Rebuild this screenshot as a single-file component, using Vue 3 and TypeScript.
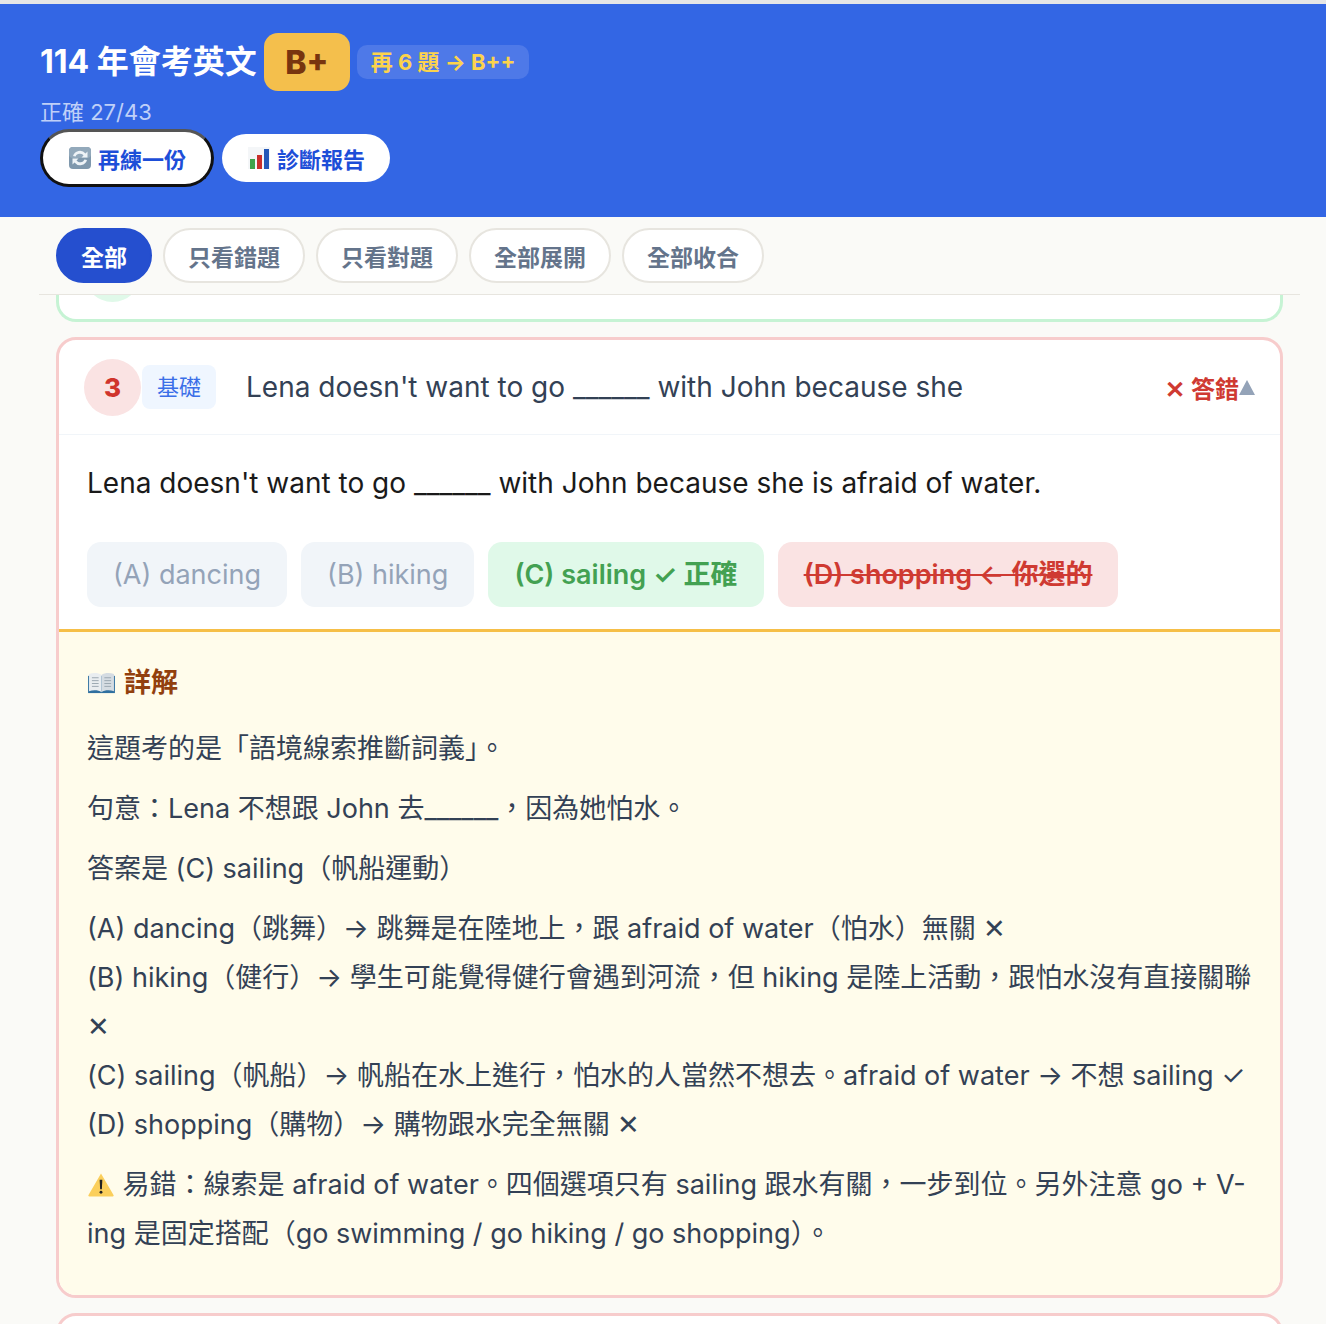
<template>
  <div class="page">
    <header class="hero">
      <div class="title-row">
        <h1 class="title">114 年會考英文</h1>
        <span class="grade">B+</span>
        <span class="next">再 6 題 → B++</span>
      </div>
      <div class="score">正確 27/43</div>
      <div class="actions">
        <button class="pill focused">
          <svg class="emoji" viewBox="0 0 24 24" width="24" height="24">
            <rect x="1" y="1" width="22" height="22" rx="4" fill="#7f98ad" />
            <rect x="1" y="1" width="22" height="11" rx="4" fill="#93a9bb" />
            <path d="M5 10a7.2 7.2 0 0 1 12.5-2.6L19.5 5.500v6h-6l2-2A4.600 4.600 0 0 0 7.600 10.500z" fill="#eef3f7" />
            <path d="M19 14a7.200 7.200 0 0 1-12.500 2.600l-2 1.900v-6h6l-2 2a4.600 4.600 0 0 0 7.900-1z" fill="#eef3f7" />
          </svg>
          再練一份
        </button>
        <button class="pill">
          <svg class="emoji" viewBox="0 0 24 24" width="24" height="24">
            <rect x="1" y="1" width="22" height="22" fill="#f4f6f8" />
            <rect x="3" y="13" width="5" height="10" fill="#3fa34a" />
            <rect x="10" y="9" width="5" height="14" fill="#c92f2a" />
            <rect x="17" y="3" width="5" height="20" fill="#2458b8" />
          </svg>
          診斷報告
        </button>
      </div>
    </header>

    <div class="content">
      <nav class="filters">
        <button v-for="f in filters" :key="f" class="chip" :class="{ active: f === '全部' }">{{ f }}</button>
      </nav>

      <div class="prev-card">
        <span class="prev-num"></span>
      </div>

      <section class="card">
        <div class="card-head">
          <span class="num">3</span>
          <span class="level">基礎</span>
          <span class="preview">Lena doesn't want to go ______ with John because she</span>
          <span class="verdict">✕ 答錯</span>
          <span class="caret"></span>
        </div>
        <div class="card-body">
          <p class="question">Lena doesn't want to go ______ with John because she is afraid of water.</p>
          <div class="options">
            <span v-for="o in options" :key="o.text" class="option" :class="o.kind">{{ o.text }}</span>
          </div>
        </div>
        <div class="explain">
          <h3 class="explain-title">
            <svg class="book" viewBox="0 0 30 24" width="29" height="23">
              <path d="M1 4h28v18H1z" fill="#2f6f9f" />
              <path d="M2 2c5-1.500 10-1 13 1v18c-3-2-8-2.500-13-1z" fill="#e9edf0" />
              <path d="M28 2c-5-1.500-10-1-13 1v18c3-2 8-2.500 13-1z" fill="#d5dce2" />
              <path d="M5 6h7M5 9h7M5 12h7M5 15h7M18 6h7M18 9h7M18 12h7M18 15h7" stroke="#9aa6b0" stroke-width="1" />
            </svg>
            詳解
          </h3>
          <p class="para">這題考的是「語境線索推斷詞義」。</p>
          <p class="para">句意：Lena 不想跟 John 去______，因為她怕水。</p>
          <p class="para">答案是 (C) sailing（帆船運動）</p>
          <p class="para list">
            (A) dancing（跳舞）→ 跳舞是在陸地上，跟 afraid of water（怕水）無關 ✕<br />
            (B) hiking（健行）→ 學生可能覺得健行會遇到河流，但 hiking 是陸上活動，跟怕水沒有直接關聯 ✕<br />
            (C) sailing（帆船）→ 帆船在水上進行，怕水的人當然不想去。afraid of water → 不想 sailing ✓<br />
            (D) shopping（購物）→ 購物跟水完全無關 ✕
          </p>
          <p class="para last">
            <svg class="warn" viewBox="0 0 28 26" width="28" height="25">
              <path d="M14 1.500 27 24a1 1 0 0 1-.8 1.500H1.800A1 1 0 0 1 1 24z" fill="#fbcf5b" />
              <path d="M12.600 8h2.800l-.5 10h-1.800z" fill="#222" />
              <circle cx="14" cy="21" r="1.500" fill="#222" />
            </svg>
            易錯：線索是 afraid of water。四個選項只有 sailing 跟水有關，一步到位。另外注意 go + V-ing 是固定搭配（go swimming / go hiking / go shopping）。
          </p>
        </div>
      </section>

      <div class="next-card"></div>
    </div>
  </div>
</template>

<script setup lang="ts">
const filters: string[] = ['全部', '只看錯題', '只看對題', '全部展開', '全部收合']

const options = [
  { text: '(A) dancing', kind: 'muted' },
  { text: '(B) hiking', kind: 'muted' },
  { text: '(C) sailing ✓ 正確', kind: 'right' },
  { text: '(D) shopping ← 你選的', kind: 'wrong' },
]
</script>

<style>
html,
body {
  margin: 0;
  background: #fafaf7;
}
</style>

<style scoped>
.page {
  height: 1324px;
  overflow: hidden;
  border-top: 4px solid #e6e6e6;
  box-sizing: border-box;
  background: #fafaf7;
  font-family: Inter, "Noto Sans CJK TC", sans-serif;
  color: #334155;
}

.hero {
  height: 213px;
  box-sizing: border-box;
  background: #3366e4;
  padding: 29px 40px 0;
}

.title-row {
  display: flex;
  align-items: center;
  gap: 7px;
}

.title {
  margin: 0;
  font-size: 32px;
  font-weight: 700;
  line-height: 58px;
  color: #fff;
}

.grade {
  width: 86px;
  height: 58px;
  border-radius: 14px;
  background: #f4bf4c;
  color: #78350f;
  font-size: 32px;
  font-weight: 800;
  display: flex;
  align-items: center;
  justify-content: center;
}

.next {
  height: 34px;
  padding: 0 14px;
  border-radius: 10px;
  background: #4e79e8;
  color: #fcd34d;
  font-size: 22px;
  font-weight: 700;
  line-height: 34px;
}

.score {
  margin-top: 4px;
  font-size: 22px;
  line-height: 34px;
  color: #bfd0f8;
}

.actions {
  display: flex;
  align-items: center;
  gap: 8px;
}

.pill {
  height: 48px;
  padding: 0 25px;
  border: none;
  border-radius: 24px;
  background: #fff;
  color: #1d4ed8;
  font-family: inherit;
  font-size: 22px;
  font-weight: 700;
  display: flex;
  align-items: center;
  gap: 6px;
}

.pill.focused {
  height: 58px;
  padding: 0 25px;
  border: 3px solid #111;
  border-top-color: #555;
  border-radius: 29px;
}

.emoji {
  flex: none;
}

.content {
  margin: 0 26px 0 39px;
}

.filters {
  display: flex;
  gap: 11px;
  padding: 11px 17px;
  border-bottom: 1px solid #e7e5df;
}

.chip {
  height: 55px;
  padding: 0 23px;
  border: 2px solid #e7e5df;
  border-radius: 28px;
  background: #fff;
  color: #64748b;
  font-family: inherit;
  font-size: 23px;
  font-weight: 700;
}

.chip.active {
  border-color: #254fcf;
  background: #254fcf;
  color: #fff;
}

.prev-card {
  height: 27px;
  margin: 0 17px;
  overflow: hidden;
  box-sizing: border-box;
  border: 3px solid #c6f3d4;
  border-top: none;
  border-radius: 0 0 20px 20px;
  background: #fff;
  padding-left: 25px;
}

.prev-num {
  display: block;
  width: 57px;
  height: 57px;
  margin-top: -50px;
  border-radius: 50%;
  background: #e0f9e9;
}

.card {
  margin: 15px 17px 0;
  border: 3px solid #f7cccc;
  border-radius: 20px;
  background: #fff;
  overflow: hidden;
}

.card-head {
  height: 95px;
  box-sizing: border-box;
  padding: 0 25px;
  border-bottom: 1px solid #f1f5f9;
  display: flex;
  align-items: center;
}

.num {
  width: 57px;
  height: 57px;
  border-radius: 50%;
  background: #fae3e3;
  color: #d0342c;
  font-size: 26px;
  font-weight: 800;
  display: flex;
  align-items: center;
  justify-content: center;
  flex: none;
}

.level {
  height: 44px;
  padding: 0 15px;
  margin-left: 1px;
  border-radius: 8px;
  background: #eff6ff;
  color: #3b6fe8;
  font-size: 22px;
  line-height: 44px;
  flex: none;
}

.preview {
  margin-left: 30px;
  flex: 1;
  font-size: 28px;
  color: #334155;
  white-space: nowrap;
}

.verdict {
  color: #cf3a32;
  font-size: 24px;
  font-weight: 700;
}

.caret {
  width: 0;
  height: 0;
  border-left: 8px solid transparent;
  border-right: 8px solid transparent;
  border-bottom: 15px solid #94a3b8;
}

.card-body {
  padding: 29px 28px 22px;
}

.question {
  margin: 0;
  font-size: 28px;
  line-height: 38px;
  color: #1a1a1a;
}

.options {
  display: flex;
  gap: 14px;
  margin-top: 40px;
}

.option {
  height: 65px;
  padding: 0 26px;
  border-radius: 14px;
  font-size: 27px;
  line-height: 65px;
  background: #f1f5f9;
  color: #94a3b8;
}

.option.right {
  background: #e0f9e9;
  color: #43a152;
  font-weight: 600;
}

.option.wrong {
  background: #fae3e3;
  color: #cf3a32;
  font-weight: 600;
  text-decoration: line-through;
}

.explain {
  border-top: 3px solid #f6bf47;
  background: #fffceb;
  padding: 30px 28px 26px;
}

.explain-title {
  margin: 0 0 20px;
  font-size: 27px;
  line-height: 42px;
  font-weight: 700;
  color: #92400e;
  display: flex;
  align-items: center;
  gap: 8px;
}

.para {
  margin: 0 0 11px;
  font-size: 27px;
  line-height: 49px;
}

.warn {
  vertical-align: -3px;
}

.next-card {
  height: 40px;
  margin: 15px 17px 0;
  border: 3px solid #f7cccc;
  border-radius: 20px;
  background: #fff;
}
</style>
